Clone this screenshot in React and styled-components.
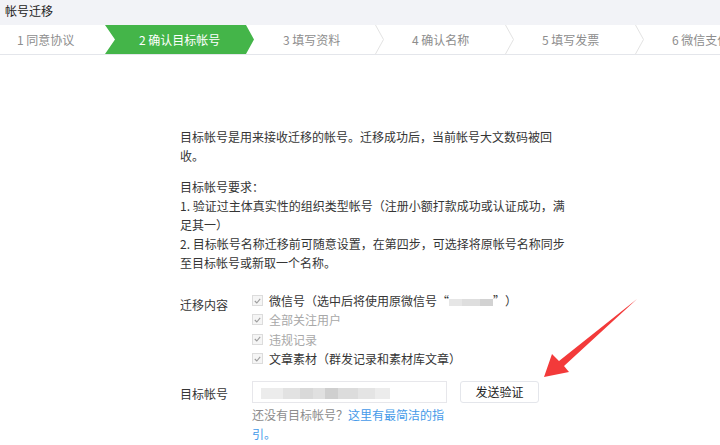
import React from 'react'
import styled, { createGlobalStyle } from 'styled-components'

const Global = createGlobalStyle`
  html, body { margin: 0; padding: 0; background: #fff; }
  body {
    font-family: "Noto Sans CJK SC", "Liberation Sans", sans-serif;
    font-size: 12px;
    color: #353535;
    text-spacing-trim: space-all;
  }
`

const Page = styled.div`
  position: relative;
  width: 720px;
  height: 445px;
  overflow: hidden;
`

const Header = styled.div`
  height: 25px;
  line-height: 22px;
  padding-left: 5px;
  background: #f2f3f7;
  color: #222;
`

const Steps = styled.div`
  display: flex;
  height: 29px;
  border-bottom: 1px solid #e4e6eb;
  white-space: nowrap;
`

const Step = styled.div`
  flex: none;
  width: ${p => p.$w}px;
  padding-left: ${p => p.$pad}px;
  box-sizing: border-box;
  line-height: 29px;
  color: ${p => (p.$active ? '#fff' : '#8d8d8d')};
  background: ${p => (p.$active ? '#44b549' : 'transparent')};
  clip-path: ${p =>
    p.$active
      ? 'polygon(0 0, calc(100% - 8px) 0, 100% 50%, calc(100% - 8px) 100%, 0 100%, 10px 50%)'
      : 'none'};
`

const Sep = () => (
  <svg width="10" height="29" style={{ flex: 'none' }}>
    <polyline points="0.5,0 8.5,14.5 0.5,29" fill="none" stroke="#e3e3e3" strokeWidth="1" />
  </svg>
)

const Main = styled.div`
  padding: 72px 0 0 180px;
`

const Desc = styled.div`
  width: 390px;
  line-height: 19px;
  p { margin: 0 0 12px; }
  p:last-child { margin-bottom: 0; }
`

const FormRow = styled.div`
  display: flex;
  margin-top: ${p => p.$top}px;
`

const Label = styled.div`
  flex: none;
  width: 72px;
  padding-top: ${p => p.$pt}px;
  line-height: ${p => p.$lh}px;
`

const Checks = styled.div`
  display: flex;
  flex-direction: column;
`

const CheckRow = styled.div`
  display: flex;
  align-items: center;
  height: 19.3px;
  color: ${p => (p.$disabled ? '#a8a8a8' : '#353535')};
  white-space: nowrap;
`

const Box = styled.span`
  flex: none;
  width: 9px;
  height: 9px;
  margin-right: 6px;
  border: 1px solid #dcdcdc;
  background: #f5f5f5;
  display: flex;
  align-items: center;
  justify-content: center;
`

const Smudge = styled.span`
  display: inline-block;
  width: ${p => p.$w}px;
  height: ${p => p.$h}px;
  vertical-align: middle;
  filter: blur(0.7px);
  background: ${p => p.$bg};
`

const Field = styled.div`
  display: flex;
  flex-direction: column;
`

const InputLine = styled.div`
  display: flex;
`

const FakeInput = styled.div`
  width: 195px;
  height: 22px;
  box-sizing: border-box;
  border: 1px solid #e7e7eb;
  padding: 6px 0 0 8px;
  line-height: 0;
`

const Button = styled.button`
  margin-left: 13px;
  width: 79px;
  height: 22px;
  box-sizing: border-box;
  border: 1px solid #e4e6eb;
  border-radius: 3px;
  background: #fff;
  font-family: inherit;
  font-size: 12px;
  color: #222;
  padding: 0;
`

const Help = styled.div`
  width: 196px;
  margin-top: 2px;
  line-height: 19.5px;
  color: #8d8d8d;
  a { color: #459ae9; text-decoration: none; }
`

const Arrow = styled.svg`
  position: absolute;
  left: 0;
  top: 0;
  pointer-events: none;
`

const Check = () => (
  <svg width="7" height="6" viewBox="0 0 7 6">
    <polyline points="0.8,3 2.8,5 6.2,0.8" fill="none" stroke="#9c9c9c" strokeWidth="1.1" />
  </svg>
)

const steps = [
  { t: '1 同意协议', w: 105, pad: 17 },
  { t: '2 确认目标帐号', w: 149, pad: 34, active: true },
  { t: '3 填写资料', w: 121, pad: 29, sep: true },
  { t: '4 确认名称', w: 120, pad: 27, sep: true },
  { t: '5 填写发票', w: 120, pad: 27, sep: true },
  { t: '6 微信支付', w: 120, pad: 27 },
]

const items = [
  { t: 'wx' },
  { t: '全部关注用户', disabled: true },
  { t: '违规记录', disabled: true },
  { t: '文章素材（群发记录和素材库文章）' },
]

export default function App() {
  return (
    <Page>
      <Global />
      <Header>帐号迁移</Header>
      <Steps>
        {steps.map((s, i) => (
          <React.Fragment key={i}>
            <Step $w={s.w} $pad={s.pad} $active={s.active}>{s.t}</Step>
            {s.sep && <Sep />}
          </React.Fragment>
        ))}
      </Steps>
      <Main>
        <Desc>
          <p>目标帐号是用来接收迁移的帐号。迁移成功后，当前帐号大文数码被回收。</p>
          <p>
            目标帐号要求：<br />
            1. 验证过主体真实性的组织类型帐号（注册小额打款成功或认证成功，满足其一）<br />
            2. 目标帐号名称迁移前可随意设置，在第四步，可选择将原帐号名称同步至目标帐号或新取一个名称。
          </p>
        </Desc>
        <FormRow $top={19}>
          <Label $pt={4} $lh={19.5}>迁移内容</Label>
          <Checks>
            {items.map((it, i) => (
              <CheckRow key={i} $disabled={it.disabled}>
                <Box><Check /></Box>
                {it.t === 'wx' ? (
                  <span>
                    微信号（选中后将使用原微信号“
                    <Smudge $w={44} $h={7} $bg="linear-gradient(90deg, #e6e6e6 0 30%, #dedede 30% 70%, #d2d2d2 70% 100%)" />
                    ”）
                  </span>
                ) : it.t}
              </CheckRow>
            ))}
          </Checks>
        </FormRow>
        <FormRow $top={12.5}>
          <Label $pt={2} $lh={22}>目标帐号</Label>
          <Field>
            <InputLine>
              <FakeInput>
                <Smudge
                  $w={129}
                  $h={11}
                  $bg="linear-gradient(90deg, #ececec 0 17%, #e2e2e2 17% 30%, #d9d9d9 30% 40%, #e0e0e0 40% 50%, #cfcfcf 50% 60%, #dcdcdc 60% 75%, #e4e4e4 75% 88%, #ececec 88% 100%)"
                />
              </FakeInput>
              <Button>发送验证</Button>
            </InputLine>
            <Help>
              还没有目标帐号？<a href="#">这里有最简洁的指引。</a>
            </Help>
          </Field>
        </FormRow>
      </Main>
      <Arrow width="720" height="445" viewBox="0 0 720 445">
        <path d="M544,377 L552,354 L559,361 L637,299 L564,366 L569,372 Z" fill="#f33a3a" />
      </Arrow>
    </Page>
  )
}
